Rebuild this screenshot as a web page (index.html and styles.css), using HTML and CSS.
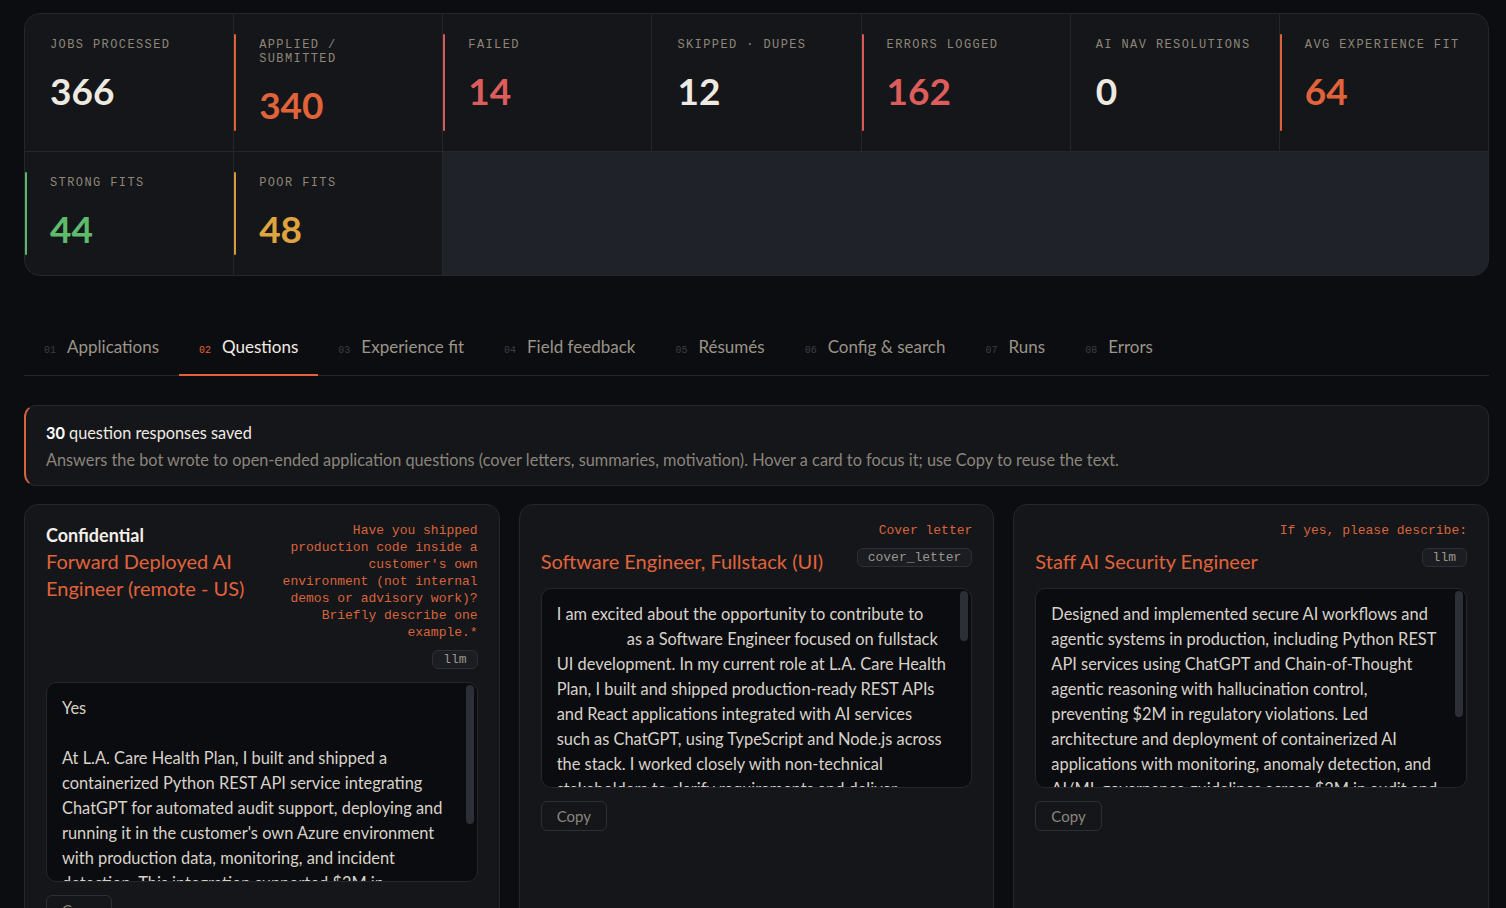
FILE: index.html
```html
<!DOCTYPE html>
<html lang="en">
<head>
<meta charset="utf-8">
<title>Questions</title>
<link rel="stylesheet" href="styles.css">
</head>
<body>
<main class="page">
  <section class="stats">
    <div class="stat"><div class="stat-label">Jobs processed</div><div class="stat-value">366</div></div>
    <div class="stat accent-orange"><div class="stat-label">Applied / submitted</div><div class="stat-value v-orange">340</div></div>
    <div class="stat accent-red"><div class="stat-label">Failed</div><div class="stat-value v-red">14</div></div>
    <div class="stat"><div class="stat-label">Skipped · dupes</div><div class="stat-value">12</div></div>
    <div class="stat accent-red"><div class="stat-label">Errors logged</div><div class="stat-value v-red">162</div></div>
    <div class="stat"><div class="stat-label">AI nav resolutions</div><div class="stat-value">0</div></div>
    <div class="stat accent-orange"><div class="stat-label">Avg experience fit</div><div class="stat-value v-orange">64</div></div>
    <div class="stat accent-green"><div class="stat-label">Strong fits</div><div class="stat-value v-green">44</div></div>
    <div class="stat accent-yellow"><div class="stat-label">Poor fits</div><div class="stat-value v-yellow">48</div></div>
    <div class="stat-filler"></div>
  </section>

  <nav class="tabs">
    <a class="tab"><span class="tab-num">01</span><span class="tab-label">Applications</span></a>
    <a class="tab active"><span class="tab-num">02</span><span class="tab-label">Questions</span></a>
    <a class="tab"><span class="tab-num">03</span><span class="tab-label">Experience fit</span></a>
    <a class="tab"><span class="tab-num">04</span><span class="tab-label">Field feedback</span></a>
    <a class="tab"><span class="tab-num">05</span><span class="tab-label">Résumés</span></a>
    <a class="tab"><span class="tab-num">06</span><span class="tab-label">Config &amp; search</span></a>
    <a class="tab"><span class="tab-num">07</span><span class="tab-label">Runs</span></a>
    <a class="tab"><span class="tab-num">08</span><span class="tab-label">Errors</span></a>
  </nav>

  <section class="banner">
    <div class="banner-title"><strong>30</strong> question responses saved</div>
    <div class="banner-sub">Answers the bot wrote to open-ended application questions (cover letters, summaries, motivation). Hover a card to focus it; use Copy to reuse the text.</div>
  </section>

  <section class="cards">
    <article class="card">
      <header class="card-head">
        <div class="card-job">
          <div class="company">Confidential</div>
          <div class="job-title">Forward Deployed AI Engineer (remote - US)</div>
        </div>
        <div class="card-meta">
          <div class="question">Have you shipped production code inside a customer's own environment (not internal demos or advisory work)? Briefly describe one example.*</div>
          <span class="badge">llm</span>
        </div>
      </header>
      <div class="answer-wrap">
        <div class="answer">Yes

At L.A. Care Health Plan, I built and shipped a containerized Python REST API service integrating ChatGPT for automated audit support, deploying and running it in the customer's own Azure environment with production data, monitoring, and incident detection. This integration supported $2M in compliance savings and was maintained by the operations team after handoff.</div>
        <span class="thumb" style="height:139px"></span>
      </div>
      <button class="copy">Copy</button>
    </article>

    <article class="card">
      <header class="card-head">
        <div class="card-job">
          <div class="company"></div>
          <div class="job-title">Software Engineer, Fullstack (UI)</div>
        </div>
        <div class="card-meta">
          <div class="question">Cover letter</div>
          <span class="badge">cover_letter</span>
        </div>
      </header>
      <div class="answer-wrap">
        <div class="answer">I am excited about the opportunity to contribute to <span class="redacted"></span> as a Software Engineer focused on fullstack UI development. In my current role at L.A. Care Health Plan, I built and shipped production-ready REST APIs and React applications integrated with AI services such as ChatGPT, using TypeScript and Node.js across the stack. I worked closely with non-technical stakeholders to clarify requirements and deliver features end to end.</div>
        <span class="thumb" style="height:50px"></span>
      </div>
      <button class="copy">Copy</button>
    </article>

    <article class="card">
      <header class="card-head">
        <div class="card-job">
          <div class="company"></div>
          <div class="job-title">Staff AI Security Engineer</div>
        </div>
        <div class="card-meta">
          <div class="question">If yes, please describe:</div>
          <span class="badge">llm</span>
        </div>
      </header>
      <div class="answer-wrap">
        <div class="answer">Designed and implemented secure AI workflows and agentic systems in production, including Python REST API services using ChatGPT and Chain-of-Thought agentic reasoning with hallucination control, preventing $2M in regulatory violations. Led architecture and deployment of containerized AI applications with monitoring, anomaly detection, and AI/ML governance guidelines across $2M in audit and RBAC controls.</div>
        <span class="thumb" style="height:126px"></span>
      </div>
      <button class="copy">Copy</button>
    </article>
  </section>
</main>
</body>
</html>
```

FILE: styles.css
```css
html {
  overflow: hidden;
  background: #0c0d10;
}

body {
  margin: 0;
  background: #0c0d10;
  color: #d9d4cb;
  font-family: Lato, "Noto Sans", "Liberation Sans", sans-serif;
}

.page {
  padding: 13px 17px 0 24px;
}

/* ---------- Stats ---------- */
.stats {
  display: grid;
  grid-template-columns: repeat(7, 1fr);
  gap: 1px;
  background: #25272d;
  border: 1px solid #25272d;
  border-radius: 16px;
  overflow: hidden;
}

.stat {
  position: relative;
  background: #15161a;
  padding: 24px 25px 24px 25px;
}

.stat::before {
  content: "";
  position: absolute;
  left: 0;
  top: 20px;
  bottom: 20px;
  width: 2px;
  border-radius: 1px;
  background: transparent;
}

.accent-orange::before { background: #de6139; }
.accent-red::before { background: #d75a58; }
.accent-green::before { background: #5cb66a; }
.accent-yellow::before { background: #d69c37; }

.stat-filler {
  grid-column: 3 / -1;
  background: #202229;
}

.stat-label {
  font-family: "Liberation Mono", "DejaVu Sans Mono", monospace;
  font-size: 12px;
  line-height: 14px;
  letter-spacing: 1.4px;
  text-transform: uppercase;
  color: #8d8679;
}

.stat-value {
  margin-top: 17px;
  font-size: 37px;
  line-height: 44px;
  font-weight: 700;
  color: #eee9e1;
}

.v-orange { color: #e0633a; }
.v-red { color: #dc5d5b; }
.v-green { color: #5fbb6c; }
.v-yellow { color: #dfa43f; }

/* ---------- Tabs ---------- */
.tabs {
  display: flex;
  margin-top: 45px;
  border-bottom: 1px solid #25272d;
}

.tab {
  display: flex;
  align-items: baseline;
  gap: 11px;
  padding: 14px 20px 15px;
  border-bottom: 2px solid transparent;
  margin-bottom: -1px;
  cursor: pointer;
}

.tab-num {
  font-family: "Liberation Mono", "DejaVu Sans Mono", monospace;
  font-size: 10px;
  color: #3b3e46;
}

.tab-label {
  font-size: 17px;
  line-height: 24px;
  color: #9b9488;
}

.tab.active {
  border-bottom-color: #e0633a;
}

.tab.active .tab-num { color: #e0633a; }
.tab.active .tab-label { color: #f1ece4; }

/* ---------- Banner ---------- */
.banner {
  margin-top: 29px;
  background: #15161a;
  border: 1px solid #25272d;
  border-left: 2px solid #d8643a;
  border-radius: 12px;
  padding: 15px 20px 13px;
}

.banner-title {
  font-size: 16.3px;
  line-height: 24px;
  color: #efeae2;
}

.banner-title strong {
  font-weight: 700;
  color: #ffffff;
}

.banner-sub {
  margin-top: 3px;
  font-size: 16.3px;
  line-height: 24px;
  color: #8b857a;
}

/* ---------- Cards ---------- */
.cards {
  display: grid;
  grid-template-columns: repeat(3, 1fr);
  gap: 19px;
  margin-top: 18px;
}

.card {
  background: #15161a;
  border: 1px solid #25272d;
  border-radius: 14px;
  padding: 17px 21px 40px;
  min-height: 420px;
}

.card-head {
  display: flex;
  justify-content: space-between;
  align-items: flex-start;
  gap: 16px;
  margin-bottom: 13px;
}

.card-job {
  flex: 1 1 auto;
  min-width: 0;
}

.company {
  font-size: 18px;
  line-height: 26px;
  min-height: 26px;
  font-weight: 700;
  color: #f3efe8;
}

.job-title {
  font-size: 20px;
  line-height: 27px;
  color: #e0633a;
}

.card-meta {
  flex: 0 1 auto;
  max-width: 200px;
  display: flex;
  flex-direction: column;
  align-items: flex-end;
}

.question {
  font-family: "Liberation Mono", "DejaVu Sans Mono", monospace;
  font-size: 13px;
  line-height: 17px;
  text-align: right;
  color: #d9643a;
}

.badge {
  margin-top: 9px;
  font-family: "Liberation Mono", "DejaVu Sans Mono", monospace;
  font-size: 13px;
  line-height: 17px;
  color: #9a958c;
  background: #1b1d22;
  border: 1px solid #2c2f35;
  border-radius: 6px;
  padding: 0 10px;
}

.answer-wrap {
  position: relative;
}

.answer {
  box-sizing: border-box;
  height: 200px;
  overflow: hidden;
  white-space: pre-wrap;
  background: #0b0c0f;
  border: 1px solid #25272d;
  border-radius: 10px;
  padding: 12px 25px 12px 15px;
  font-size: 16.4px;
  line-height: 25px;
  color: #d8d3ca;
}

.thumb {
  position: absolute;
  top: 3px;
  right: 4px;
  width: 8px;
  border-radius: 4px;
  background: #2c2f36;
}

.redacted {
  display: inline-block;
  width: 66px;
}

.copy {
  display: block;
  margin-top: 13px;
  font-family: inherit;
  font-size: 15px;
  line-height: 20px;
  color: #8b857a;
  background: #15161a;
  border: 1px solid #2c2f35;
  border-radius: 6px;
  padding: 4px 15px;
  cursor: pointer;
}
```
